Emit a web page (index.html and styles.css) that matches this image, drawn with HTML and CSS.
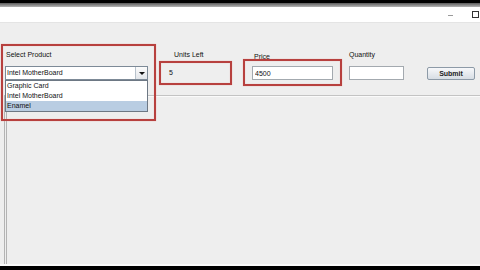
FILE: index.html
```html
<!DOCTYPE html>
<html lang="en">
<head>
    <meta charset="UTF-8">
    <meta name="viewport" content="width=device-width, initial-scale=1.0">
    <title>Product Order</title>
    <link rel="stylesheet" href="styles.css">
</head>
<body>

    <div class="topbar"></div>
    <div class="edge"></div>

    <!-- Window title bar -->
    <div class="titlebar">
        <span class="win-min"></span>
        <span class="win-max"></span>
    </div>

    <div class="panel">
        <div class="form-row">
            <!-- Product combo -->
            <div class="col col-product">
                <label class="lbl lbl-product">Select Product</label>
                <div class="combo">
                    <span class="combo-text">Intel MotherBoard</span>
                    <span class="combo-btn"><span class="arrow"></span></span>
                </div>
                <ul class="popup">
                    <li>Graphic Card</li>
                    <li>Intel MotherBoard</li>
                    <li class="selected">Enamel</li>
                </ul>
            </div>

            <!-- Units left -->
            <div class="col col-units">
                <label class="lbl lbl-units">Units Left</label>
                <div class="value">5</div>
            </div>

            <!-- Price -->
            <div class="col col-price">
                <label class="lbl lbl-price">Price</label>
                <input type="text" class="field" value="4500">
            </div>

            <!-- Quantity -->
            <div class="col col-qty">
                <label class="lbl">Quantity</label>
                <input type="text" class="field">
            </div>

            <div class="col col-submit">
                <button class="button">Submit</button>
            </div>
        </div>

        <div class="lower"></div>

        <!-- red annotation boxes -->
        <div class="mark mark-product"></div>
        <div class="mark mark-units"></div>
        <div class="mark mark-price"></div>
    </div>

    <div class="bottom-line"></div>
    <div class="bottombar"></div>

</body>
</html>
```

FILE: styles.css
```css
body {
    font-family: "Liberation Sans", Arial, sans-serif;
    font-size: 7px;
    color: #111;
    margin: 0;
    padding: 0;
    width: 480px;
    height: 270px;
    overflow: hidden;
    background-color: #000;
    display: flex;
    flex-direction: column;
}
.topbar {
    height: 3px;
    background-color: #000;
}
.edge {
    height: 4px;
    background: linear-gradient(#5a5a5a, #b4b4b4);
}
.titlebar {
    height: 15px;
    background-color: #fff;
    border-bottom: 1px solid #e4e4e4;
    display: flex;
    justify-content: flex-end;
    align-items: center;
    padding-right: 1px;
}
.win-min {
    width: 5px;
    height: 1px;
    background-color: #9a9a9a;
    margin-top: 1px;
}
.win-max {
    width: 5px;
    height: 5px;
    border: 1px solid #333;
    margin-left: 19px;
}
.panel {
    height: 241px;
    background-color: #eeeeee;
    position: relative;
    display: flex;
    flex-direction: column;
}
.form-row {
    display: flex;
    align-items: flex-start;
    padding-top: 27px;
}
.col {
    display: flex;
    flex-direction: column;
    position: relative;
}
.lbl {
    display: block;
    line-height: 9px;
    height: 9px;
    margin-bottom: 7px;
    white-space: nowrap;
}
.col-product {
    margin-left: 5px;
    width: 143px;
}
.lbl-product {
    padding-left: 1px;
}
.col-units {
    margin-left: 21px;
    width: 40px;
}
.lbl-units {
    padding-left: 5px;
}
.col-price {
    margin-left: 43px;
    width: 81px;
}
.lbl-price {
    padding-left: 2px;
    margin-top: 2px;
    margin-bottom: 5px;
}
.col-qty {
    margin-left: 16px;
    width: 55px;
}
.col-submit {
    margin-left: 23px;
    width: 48px;
    padding-top: 17px;
}
.combo {
    height: 14px;
    box-sizing: border-box;
    border: 1px solid #7d8a97;
    background-color: #fff;
    display: flex;
}
.combo-text {
    flex: 1;
    line-height: 12px;
    padding-left: 1px;
}
.combo-btn {
    width: 11px;
    border-left: 1px solid #b8c2cc;
    background: linear-gradient(#fbfbfb, #e3e6ea);
    display: flex;
    align-items: center;
    justify-content: center;
}
.arrow {
    width: 0;
    height: 0;
    border-left: 3px solid transparent;
    border-right: 3px solid transparent;
    border-top: 3px solid #111;
}
.popup {
    position: absolute;
    top: 30px;
    left: 0;
    width: 143px;
    box-sizing: border-box;
    margin: 0;
    padding: 0;
    list-style: none;
    background-color: #fff;
    border: 1px solid #6d7884;
    z-index: 2;
}
.popup li {
    height: 10px;
    line-height: 10px;
    padding-left: 1px;
}
.popup .selected {
    background-color: #b9cde2;
}
.value {
    height: 14px;
    line-height: 14px;
}
.field {
    height: 14px;
    box-sizing: border-box;
    width: 100%;
    border: 1px solid #a3a9af;
    background-color: #fff;
    font-family: inherit;
    font-size: 7px;
    color: #111;
    padding: 0 2px;
    margin: 0;
    outline: none;
}
.button {
    height: 13px;
    box-sizing: border-box;
    width: 100%;
    padding: 0;
    border: 1px solid #8d9aa7;
    border-radius: 2px;
    background: linear-gradient(#f7f8fa, #d7dde4);
    font-family: inherit;
    font-size: 7px;
    font-weight: bold;
    color: #222;
    cursor: pointer;
}
.lower {
    flex: 1;
    margin-top: 15px;
    margin-left: 4px;
    border-top: 1px solid #c3c3c3;
    border-left: 3px double #b3b3b3;
    box-shadow: inset 0 1px 0 #fafafa;
}
.mark {
    position: absolute;
    border: 2px solid #b7403e;
    box-shadow: 0 0 1px #e6a3a1, inset 0 0 1px #e6a3a1;
    box-sizing: border-box;
    z-index: 3;
}
.mark-product {
    top: 21px;
    left: 1px;
    width: 155px;
    height: 77px;
}
.mark-units {
    top: 38px;
    left: 159px;
    width: 73px;
    height: 24px;
}
.mark-price {
    top: 36px;
    left: 243px;
    width: 99px;
    height: 27px;
}
.bottom-line {
    height: 2px;
    background-color: #fafafa;
}
.bottombar {
    flex: 1;
    background-color: #000;
}
```
